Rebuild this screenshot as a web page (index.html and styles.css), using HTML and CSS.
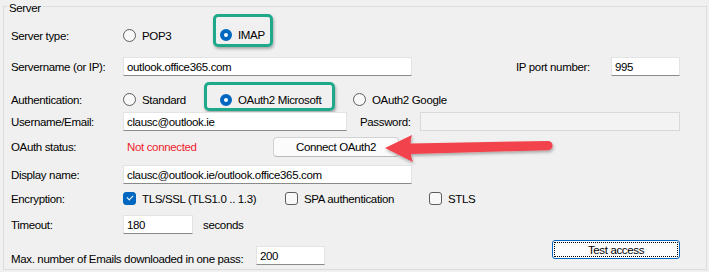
FILE: index.html
```html
<!DOCTYPE html>
<html lang="en">

<head>
    <meta charset="UTF-8" />
    <title>Server settings</title>
    <link rel="stylesheet" href="styles.css">
</head>

<body>

    <fieldset class="group">
        <legend>Server</legend>

        <div class="row r1">
            <span class="lbl">Server type:</span>
            <span class="radio w-pop"><i></i>POP3</span>
            <span class="hl hl-imap"><span class="radio on"><i></i>IMAP</span></span>
        </div>

        <div class="row r2">
            <span class="lbl">Servername (or IP):</span>
            <input class="txt w-server" type="text" value="outlook.office365.com" />
            <span class="lbl2 lbl-port">IP port number:</span>
            <input class="txt w-port" type="text" value="995" />
        </div>

        <div class="row r3">
            <span class="lbl">Authentication:</span>
            <span class="radio w-std"><i></i>Standard</span>
            <span class="hl hl-ms"><span class="radio on"><i></i>OAuth2 Microsoft</span></span>
            <span class="radio w-google"><i></i>OAuth2 Google</span>
        </div>

        <div class="row r4">
            <span class="lbl">Username/Email:</span>
            <input class="txt w-user" type="text" value="clausc@outlook.ie" />
            <span class="lbl2 lbl-pass">Password:</span>
            <input class="txt w-pass" type="password" disabled />
        </div>

        <div class="row r5">
            <span class="lbl">OAuth status:</span>
            <span class="status">Not connected</span>
            <button class="btn btn-connect">Connect OAuth2</button>
        </div>

        <div class="row r6">
            <span class="lbl">Display name:</span>
            <input class="txt w-server" type="text" value="clausc@outlook.ie/outlook.office365.com" />
        </div>

        <div class="row r7">
            <span class="lbl">Encryption:</span>
            <span class="check on w-tls"><i></i>TLS/SSL (TLS1.0 .. 1.3)</span>
            <span class="check w-spa"><i></i>SPA authentication</span>
            <span class="check"><i></i>STLS</span>
        </div>

        <div class="row r8">
            <span class="lbl">Timeout:</span>
            <input class="txt w-port w-timeout" type="text" value="180" />
            <span class="unit">seconds</span>
        </div>

        <div class="row r9">
            <span class="lbl lbl-max">Max. number of Emails downloaded in one pass:</span>
            <input class="txt w-port" type="text" value="200" />
            <button class="btn btn-test">Test access</button>
        </div>
    </fieldset>

    <!-- annotation arrow pointing at the connect button -->
    <svg class="arrow" width="185" height="45" viewBox="0 0 185 45">
        <defs>
            <filter id="shadow" x="-10%" y="-30%" width="120%" height="160%">
                <feDropShadow dx="1" dy="2" stdDeviation="1.5" flood-color="#000" flood-opacity="0.3" />
            </filter>
        </defs>
        <path filter="url(#shadow)" fill="#f2424b"
            d="M5 23 L32 10 Q30.5 14 30.5 18.5 L168 16 A4.6 4.6 0 0 1 168 25.2 L31 29 Q31 33 33 37 Z" />
    </svg>

</body>

</html>
```

FILE: styles.css
```css
body {
    margin: 0;
    background: #f0f0f0;
    font-family: "Liberation Sans", Arial, sans-serif;
    font-size: 11.5px;
    letter-spacing: -0.35px;
    color: #000;
    position: relative;
    height: 272px;
    overflow: hidden;
}

.group {
    box-sizing: border-box;
    margin: 0 2px 0 3px;
    border: 1px solid #dcdcdc;
    padding: 0 26px 0 7px;
    height: 270px;
}

.group legend {
    padding: 0 2px;
    margin-left: -4px;
    line-height: 12px;
    position: relative;
    top: 2px;
}

.row {
    display: flex;
    align-items: center;
    height: 19px;
}

.r1 { margin-top: 14px; }
.r2 { margin-top: 12px; }
.r3 { margin-top: 14px; }
.r4 { margin-top: 3px; }
.r5 { margin-top: 6px; height: 20px; }
.r6 { margin-top: 8px; }
.r7 { margin-top: 5px; }
.r8 { margin-top: 7px; }
.r9 { margin-top: 6px; height: 25px; align-items: flex-end; }

.lbl {
    width: 112px;
    flex: none;
}

.lbl-max {
    width: 245px;
}

.lbl2 {
    flex: none;
}

/* radios */
.radio,
.check {
    display: flex;
    align-items: center;
    gap: 6px;
    flex: none;
}

.radio i {
    width: 11px;
    height: 11px;
    border: 1px solid #5d5d5d;
    border-radius: 50%;
    background: #f8f8f8;
    box-sizing: content-box;
}

.radio.on i {
    width: 4px;
    height: 4px;
    border: 4.5px solid #0067c0;
    background: #fff;
}

.check i {
    width: 11px;
    height: 11px;
    border: 1px solid #5d5d5d;
    border-radius: 3px;
    background: #f8f8f8;
    position: relative;
}

.check.on i {
    border-color: #0067c0;
    background: #0067c0;
}

.check.on i::after {
    content: "";
    position: absolute;
    left: 3px;
    top: 2px;
    width: 5px;
    height: 3px;
    border-left: 1px solid #fff;
    border-bottom: 1px solid #fff;
    transform: rotate(-45deg);
}

.w-pop { width: 90px; }
.w-std { width: 81px; }
.w-google { margin-left: 18px; }
.w-tls { width: 162px; }
.w-spa { width: 144px; }

/* green highlight boxes */
.hl {
    box-sizing: border-box;
    border: 3px solid #1fa98b;
    border-radius: 5px;
    box-shadow: 1px 2px 3px rgba(0, 0, 0, 0.3);
    align-self: flex-start;
    display: flex;
    align-items: center;
    flex: none;
}

.hl-imap {
    width: 60px;
    height: 33px;
    margin-top: -12px;
    padding: 9px 0 0 4px;
}

.hl-ms {
    width: 131px;
    height: 29px;
    margin-top: -8px;
    padding: 6px 0 0 13px;
}

/* text boxes */
.txt {
    box-sizing: border-box;
    height: 19px;
    margin: 0;
    padding: 0 3px;
    border: 1px solid #e3e3e3;
    border-bottom-color: #8a8a8a;
    background: #fff;
    font: inherit;
    letter-spacing: inherit;
    color: #000;
    outline: none;
}

.w-server { width: 289px; }
.w-port { width: 69px; }
.w-timeout { width: 70px; }
.w-user { width: 224px; }
.w-pass {
    width: 260px;
    background: #f3f3f3;
    border-color: #d9d9d9;
}

.lbl-port {
    margin-left: 104px;
    width: 95px;
}

.lbl-pass {
    margin-left: 13px;
    width: 60px;
}

.status {
    color: #ee1c2e;
    padding-left: 4px;
    width: 146px;
    flex: none;
}

.unit {
    margin-left: 10px;
}

/* buttons */
.btn {
    box-sizing: border-box;
    font: inherit;
    letter-spacing: inherit;
    color: #000;
    margin: 0;
    padding: 0;
}

.btn-connect {
    width: 126px;
    height: 20px;
    background: #fbfbfb;
    border: 1px solid #d2d2d2;
    border-bottom-color: #b9b9b9;
    border-radius: 4px;
}

.btn-test {
    width: 128px;
    height: 19px;
    margin-left: auto;
    align-self: flex-start;
    background: #fdfdfd;
    border: 1px solid #0067c0;
    border-radius: 3px;
    outline: 1px dotted #000;
    outline-offset: -3px;
}

.arrow {
    position: absolute;
    left: 380px;
    top: 125px;
}
```
